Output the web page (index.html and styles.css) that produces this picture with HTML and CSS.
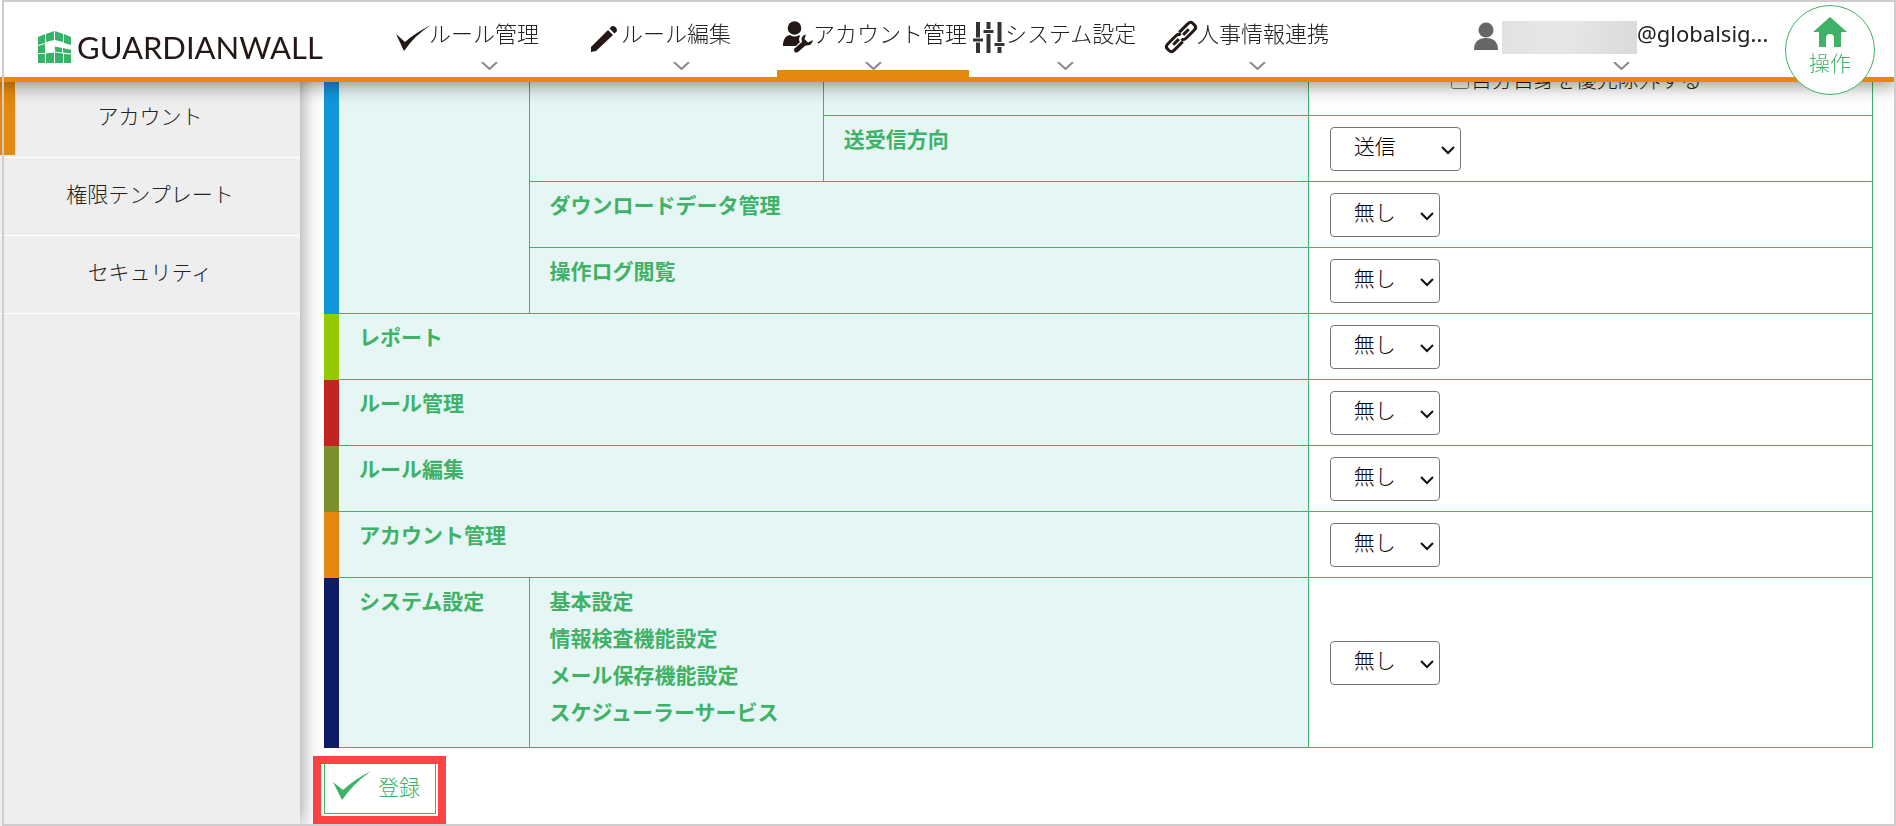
FILE: index.html
```html
<!DOCTYPE html>
<html lang="ja">

<head>
  <meta charset="UTF-8" />
  <meta name="viewport" content="width=device-width, initial-scale=1.0" />
  <title>GUARDIANWALL</title>
  <link rel="stylesheet" href="styles.css">
</head>

<body>
  <header class="header">
    <a class="logo" href="#">
      <svg width="33" height="32" viewBox="0 0 33 32">
        <path fill="#36b367" d="M0 6L7 3V12L0 14ZM8 3L16 0V9L8 11ZM17 0L25 3V11L17 9ZM26 3L33 6V14L26 12ZM0 15L7 13V22H0ZM17 15.500L24 17V21.500L17 20.500ZM25 17L33 19V22.500L25 21.500ZM0 23H7V32H0ZM8 22.500L16 21.500V32H8ZM17 21.500L25 22.500V32H17ZM26 23L33 23.500V32H26Z" />
      </svg>
      <span>GUARDIANWALL</span>
    </a>

    <nav class="nav">
      <a class="nav-item" href="#">
        <span class="nav-label">
          <svg class="icon" viewBox="0 0 32 32"><path d="M-1 13L8 21Q18 12 34 4Q18 14 7 30Z" /></svg>
          ルール管理
        </span>
        <svg class="arrow" viewBox="0 0 17 8"><path d="M1 0L8.500 7L16 0" /></svg>
      </a>
      <a class="nav-item" href="#">
        <span class="nav-label">
          <svg class="icon" viewBox="0 0 32 32"><path d="M2 31V26L19 9L24 14L7 30ZM20.500 7.500L23 5Q28 5 28 10L25.500 12.500Z" /></svg>
          ルール編集
        </span>
        <svg class="arrow" viewBox="0 0 17 8"><path d="M1 0L8.500 7L16 0" /></svg>
      </a>
      <a class="nav-item active" href="#">
        <span class="nav-label">
          <svg class="icon" viewBox="0 0 32 32">
            <circle cx="13.500" cy="7" r="6.800" />
            <path d="M2 25C2 19 4 15 9 14Q13.500 17 18 14L19 15Q17 19 19 21L15 25Z" />
            <path d="M13 28L21 21Q19 15 25 13.500L23.500 18L27 21.500L32 19Q31 25 24.500 24.500L17 31Q13 33 13 28Z" />
          </svg>
          アカウント管理
        </span>
        <svg class="arrow" viewBox="0 0 17 8"><path d="M1 0L8.500 7L16 0" /></svg>
      </a>
      <a class="nav-item" href="#">
        <span class="nav-label">
          <svg class="icon icon-gray" viewBox="0 0 32 32">
            <path d="M3 1h4v15.500H3zM0 17.500h10v3H0zM3 21.500h4V32H3zM13.500 1h4v7h-4zM10.500 9h10v3h-10zM13.500 13h4v19h-4zM24.500 1h4v20h-4zM21.500 22h10v3h-10zM24.500 26h4v6h-4z" />
          </svg>
          システム設定
        </span>
        <svg class="arrow" viewBox="0 0 17 8"><path d="M1 0L8.500 7L16 0" /></svg>
      </a>
      <a class="nav-item" href="#">
        <span class="nav-label">
          <svg class="icon icon-line" viewBox="0 0 32 32">
            <g transform="rotate(-45 16 16)">
              <path d="M14 20.500H2Q-2 20.500 -2 17.500V14.500Q-2 11.500 2 11.500H13Q17 11.500 17 14.500" />
              <path d="M18 11.500H30Q34 11.500 34 14.500V17.500Q34 20.500 30 20.500H19Q15 20.500 15 17.500" />
              <path d="M5 16H13M19 16H27" />
            </g>
          </svg>
          人事情報連携
        </span>
        <svg class="arrow" viewBox="0 0 17 8"><path d="M1 0L8.500 7L16 0" /></svg>
      </a>
    </nav>

    <a class="user" href="#">
      <span class="nav-label">
        <svg class="icon icon-user" viewBox="0 0 32 32">
          <circle cx="16" cy="9" r="7.500" />
          <path d="M4 29Q4 17 16 17T28 29Z" />
        </svg>
        <span class="user-mask"></span>@globalsig...
      </span>
      <svg class="arrow" viewBox="0 0 17 8"><path d="M1 0L8.500 7L16 0" /></svg>
    </a>

    <a class="home" href="#">
      <svg width="34" height="30" viewBox="0 0 34 30">
        <path d="M17 0L34 15H28V30H21V21Q21 17 17 17T13 21V30H6V15H0Z" />
      </svg>
      操作
    </a>
  </header>

  <div class="container">
    <aside class="side">
      <a class="side-item active" href="#">アカウント</a>
      <a class="side-item" href="#">権限テンプレート</a>
      <a class="side-item" href="#">セキュリティ</a>
    </aside>

    <main class="main">
      <table class="auth">
        <colgroup>
          <col class="col-bar">
          <col class="col-1">
          <col class="col-2">
          <col class="col-3">
          <col>
        </colgroup>
        <tbody>
          <tr>
            <td class="bar blue" rowspan="4"></td>
            <th rowspan="4"></th>
            <th rowspan="2"></th>
            <th></th>
            <td class="option">
              <label><input type="checkbox">自分自身を優先除外する</label>
            </td>
          </tr>
          <tr>
            <th><label for="direction">送受信方向</label></th>
            <td>
              <select id="direction">
                <option>送信</option>
                <option>受信</option>
                <option>送受信</option>
              </select>
            </td>
          </tr>
          <tr>
            <th colspan="2"><label for="download">ダウンロードデータ管理</label></th>
            <td><select id="download"><option>無し</option><option>有り</option></select></td>
          </tr>
          <tr>
            <th colspan="2"><label for="log">操作ログ閲覧</label></th>
            <td><select id="log"><option>無し</option><option>有り</option></select></td>
          </tr>
          <tr>
            <td class="bar lime"></td>
            <th colspan="3"><label for="report">レポート</label></th>
            <td><select id="report"><option>無し</option><option>有り</option></select></td>
          </tr>
          <tr>
            <td class="bar red"></td>
            <th colspan="3"><label for="rule">ルール管理</label></th>
            <td><select id="rule"><option>無し</option><option>有り</option></select></td>
          </tr>
          <tr>
            <td class="bar olive"></td>
            <th colspan="3"><label for="rule-edit">ルール編集</label></th>
            <td><select id="rule-edit"><option>無し</option><option>有り</option></select></td>
          </tr>
          <tr>
            <td class="bar orange"></td>
            <th colspan="3"><label for="account">アカウント管理</label></th>
            <td><select id="account"><option>無し</option><option>有り</option></select></td>
          </tr>
          <tr>
            <td class="bar navy"></td>
            <th><label for="system">システム設定</label></th>
            <th colspan="2">基本設定<br>情報検査機能設定<br>メール保存機能設定<br>スケジューラーサービス</th>
            <td><select id="system"><option>無し</option><option>有り</option></select></td>
          </tr>
        </tbody>
      </table>

      <div class="submit">
        <button class="btn" type="submit">
          <svg width="38" height="30" viewBox="0 0 38 30"><path d="M0 11L10 19Q22 8 38 0Q20 13 9 29Z" /></svg>
          登録
        </button>
      </div>
    </main>
  </div>
</body>

</html>
```

FILE: styles.css
```css
* {
  box-sizing: border-box;
  margin: 0;
  padding: 0;
}

body {
  font-family: "Noto Sans", "Noto Sans CJK JP", sans-serif;
  font-size: 21px;
  font-weight: 300;
  color: #222;
  background: #fff;
}

/* 画面の外枠 */
body::after {
  content: "";
  position: fixed;
  top: 0;
  right: 0;
  bottom: 0;
  left: 2px;
  z-index: 5;
  border: 2px solid #d0cccc;
  pointer-events: none;
}

a {
  color: inherit;
  text-decoration: none;
}

/* ヘッダー */
.header {
  position: fixed;
  top: 0;
  left: 0;
  right: 0;
  z-index: 2;
  display: flex;
  height: 82px;
  padding-left: 38px;
  border-bottom: 5px solid #e5880f;
  background: #fff;
  box-shadow: 0 3px 18px rgba(0, 0, 0, 0.45);
}

.logo {
  display: flex;
  align-items: center;
  gap: 6px;
  width: 355px;
  padding-top: 16px;
  font-family: Lato, sans-serif;
  font-size: 31px;
  font-weight: 400;
  color: #231815;
}

.nav {
  display: flex;
}

.nav-item,
.user {
  display: flex;
  flex-direction: column;
  align-items: center;
  gap: 9px;
  width: 192px;
  padding-top: 21px;
  border-bottom: 7px solid transparent;
}

.nav-item.active {
  border-color: #e5880f;
}

.nav-label {
  display: flex;
  align-items: flex-start;
  align-self: stretch;
  height: 32px;
  padding-left: 4px;
  font-size: 22px;
  line-height: 24px;
  white-space: nowrap;
}

.icon {
  flex: none;
  width: 32px;
  height: 32px;
  fill: #231815;
  overflow: visible;
}

.icon-gray {
  fill: #333;
}

.icon-line {
  fill: none;
  stroke: #231815;
  stroke-width: 3;
}

.icon-user {
  fill: #666;
}

.arrow {
  width: 17px;
  height: 8px;
  fill: none;
  stroke: #888;
  stroke-width: 2;
}

.user {
  width: 304px;
  margin-left: auto;
  margin-right: 123px;
}

.user .nav-label {
  padding-left: 1px;
  font-weight: 400;
}

.user-mask {
  width: 135px;
  height: 33px;
  background: linear-gradient(100deg, #e2e2e2, #e7e7e7 45%, #dadada);
}

.home {
  position: absolute;
  top: 5px;
  right: 21px;
  display: flex;
  flex-direction: column;
  align-items: center;
  width: 90px;
  height: 90px;
  padding-top: 11px;
  border: 1px solid #40b267;
  border-radius: 50%;
  background: #fff;
  color: #40b267;
  fill: #40b267;
}

/* サイドメニュー */
.container {
  display: flex;
  min-height: 100vh;
}

.side {
  z-index: 1;
  flex: none;
  width: 300px;
  padding-top: 80px;
  background: #eee;
  box-shadow: 0 0 20px rgba(0, 0, 0, 0.45);
}

.side-item {
  display: block;
  height: 78px;
  border-bottom: 1px solid #fff;
  line-height: 72px;
  text-align: center;
}

.side-item.active {
  background: linear-gradient(#e5880f, #e5880f) 0 0 / 15px 75px no-repeat;
}

/* 権限テーブル */
.main {
  flex: 1;
  padding: 62px 23px 0 24px;
}

.auth {
  width: 100%;
  table-layout: fixed;
  border-spacing: 0;
}

.col-bar {
  width: 15px;
}

.col-1 {
  width: 12.3%;
}

.col-2 {
  width: 19%;
}

.col-3 {
  width: 31.3%;
}

.auth th,
.auth td {
  border-right: 1px solid #40b267;
  border-bottom: 1px solid #40b267;
}

.auth th {
  padding: 5px 20px 16px;
  background: #e6f6f5;
  color: #40b267;
  font-weight: 700;
  line-height: 37px;
  text-align: left;
  vertical-align: top;
}

.auth td {
  height: 66px;
  padding: 0 21px;
}

.auth .bar {
  padding: 0;
  border: 0;
}

.auth .option {
  height: 54px;
  padding: 0 20px 18px 142px;
}

.option label {
  display: flex;
  align-items: center;
  gap: 2px;
  line-height: 35px;
}

.option input {
  width: 18px;
  height: 18px;
}

.blue { background: #1097db; }
.lime { background: #94c800; }
.red { background: #c12222; }
.olive { background: #7c902e; }
.orange { background: #e5880f; }
.navy { background: #0e1c66; }

select {
  display: block;
  height: 44px;
  padding: 0 43px 6px 23px;
  border: 1px solid #767676;
  border-radius: 4px;
  background: #fff url("data:image/svg+xml,%3Csvg xmlns='http://www.w3.org/2000/svg' width='14' height='9' fill='none' stroke='%23111' stroke-width='2'%3E%3Cpath d='M1 1l6 6 6-6'/%3E%3C/svg%3E") right 5px top 18px no-repeat;
  color: #000;
  font: inherit;
  appearance: none;
}

/* 登録ボタン */
.submit {
  position: relative;
  width: fit-content;
  margin-top: 12px;
}

.submit::after {
  content: "";
  position: absolute;
  top: -4px;
  right: -10px;
  bottom: -10px;
  left: -11px;
  border: 8px solid #ff4343;
  pointer-events: none;
}

.btn {
  display: flex;
  align-items: center;
  gap: 7px;
  height: 54px;
  padding: 0 15px 2px 8px;
  border: 1px solid #40b267;
  background: #fff;
  color: #40b267;
  fill: #40b267;
  font: inherit;
}
```
